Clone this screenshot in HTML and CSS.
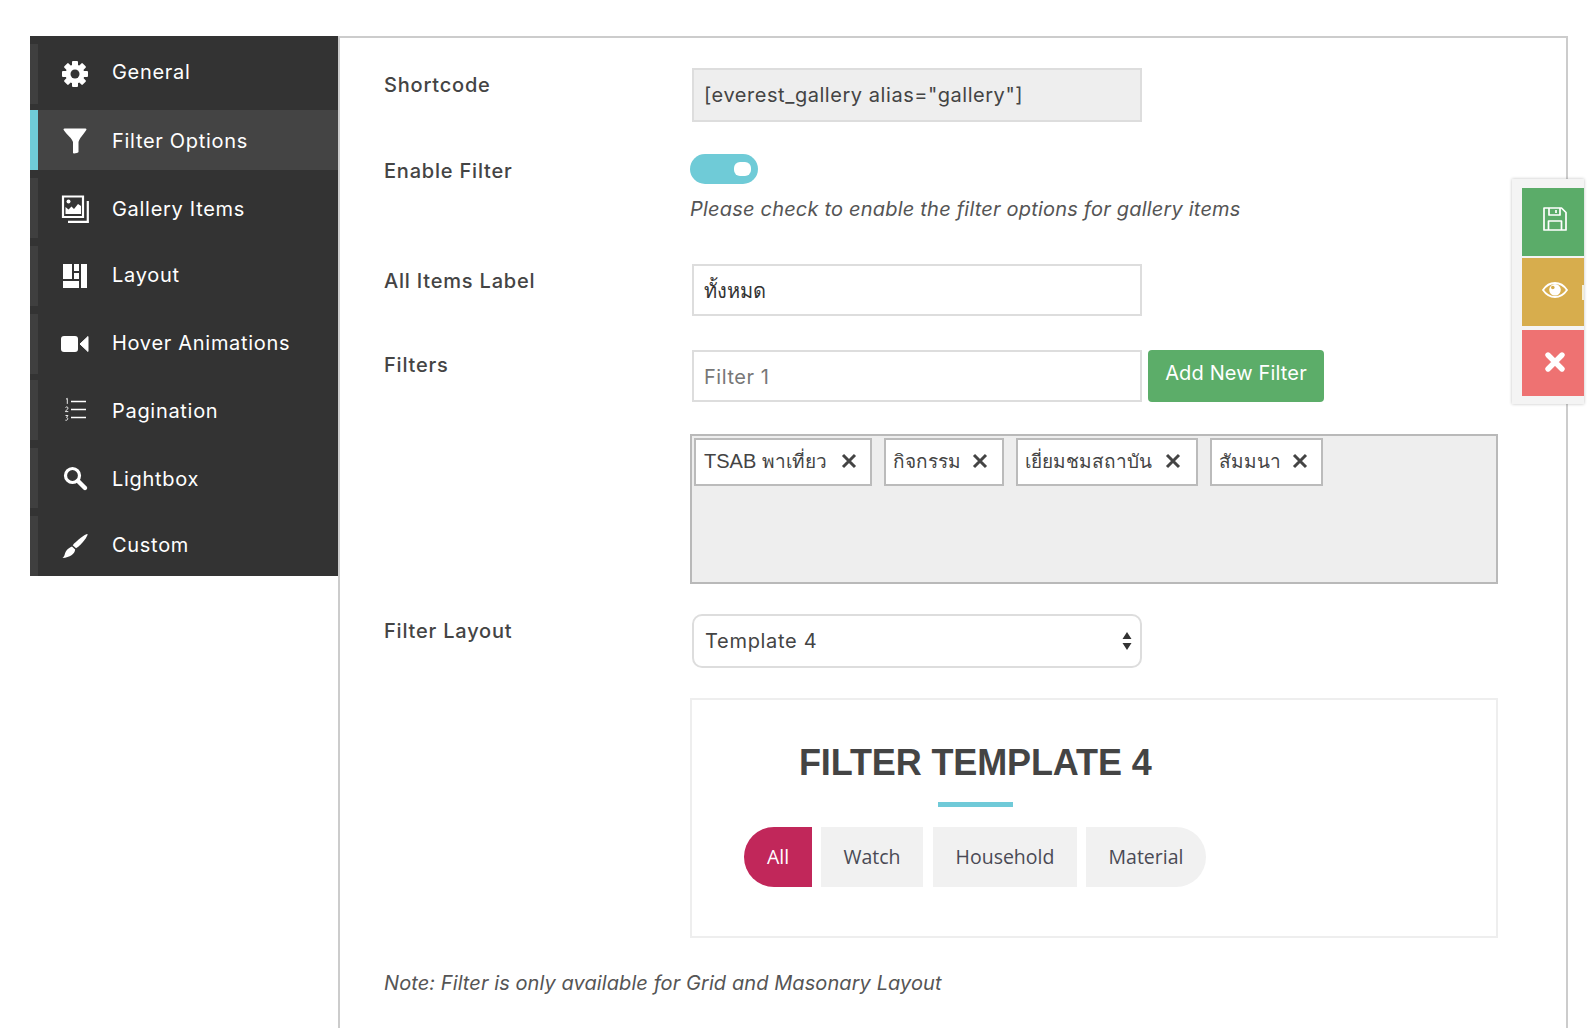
FILE: index.html
```html
<!DOCTYPE html>
<html lang="en">
<head>
<meta charset="utf-8">
<title>Filter Options</title>
<link rel="stylesheet" href="styles.css">
</head>
<body>
<div class="page">
  <nav class="sidebar">
    <a class="nav-item">
      <svg class="nav-icon" viewBox="0 0 30 30"><g fill="#fff"><rect x="12" y="2" width="6" height="26" rx="1"/><rect x="12" y="2" width="6" height="26" rx="1" transform="rotate(45 15 15)"/><rect x="12" y="2" width="6" height="26" rx="1" transform="rotate(90 15 15)"/><rect x="12" y="2" width="6" height="26" rx="1" transform="rotate(135 15 15)"/></g><circle cx="15" cy="15" r="9.500" fill="#fff"/><circle cx="15" cy="15" r="4.500" fill="#333"/></svg>
      <span class="text-up-2">General</span>
    </a>
    <a class="nav-item tight active">
      <svg class="nav-icon" viewBox="0 0 30 30"><path d="M4.500 3.500H25.500c.9 0 1.200.8.8 1.400C23 10 19.500 13 18.500 17v10c0 .9-5.500 2-5.500 1V17C12 13 7 10 3.700 4.900c-.4-.6-.1-1.400.8-1.400z" fill="#fff"/></svg>
      <span class="text-down">Filter Options</span>
    </a>
    <a class="nav-item">
      <svg class="nav-icon" viewBox="0 0 30 30"><path d="M3 3.500h20v20.500H3z" fill="none" stroke="#fff" stroke-width="2.200"/><path d="M27.800 8v20.800H8" fill="none" stroke="#fff" stroke-width="2.200"/><path d="M5.500 21v-7l3 2.500 3-3 2.500 2.500 4-5 3 2v8z" fill="#fff"/><circle cx="8.500" cy="8.500" r="2" fill="#fff"/></svg>
      <span class="text-down">Gallery Items</span>
    </a>
    <a class="nav-item">
      <svg class="nav-icon" viewBox="0 0 30 30"><path d="M3 3h9v15H3zM14 3h5v7h-5zM21 3h6v24h-6zM14 12h5v6h-5zM3 20h16v7H3z" fill="#fff"/></svg>
      <span class="text-up">Layout</span>
    </a>
    <a class="nav-item">
      <svg class="nav-icon" viewBox="0 0 30 30"><rect x="1" y="7" width="17" height="16" rx="3" fill="#fff"/><path d="M20 15l8-7.500v15z" fill="#fff" stroke="#fff" stroke-width="1" stroke-linejoin="round"/></svg>
      <span class="text-up">Hover Animations</span>
    </a>
    <a class="nav-item tight">
      <svg class="nav-icon" viewBox="0 0 30 30"><path d="M11 6.500h15M11 14.500h15M11 22.500h15" stroke="#fff" stroke-width="1.300"/><path d="M6 4.200l1.300-.8v5.500M5.500 12.500c.8-1 2.600-.6 2.500.6 0 1-2.300 2.500-2.600 3.500h2.900M5.500 20.500h2.400l-1.300 1.900c1.500 0 1.800 3.400-1.200 2.800" fill="none" stroke="#fff" stroke-width=".9"/></svg>
      <span class="text-down">Pagination</span>
    </a>
    <a class="nav-item">
      <svg class="nav-icon" viewBox="0 0 30 30"><circle cx="12.500" cy="12.500" r="7" fill="none" stroke="#fff" stroke-width="3.200"/><path d="M18 18l7 7" stroke="#fff" stroke-width="4.400" stroke-linecap="round"/></svg>
      <span class="text-down">Lightbox</span>
    </a>
    <a class="nav-item">
      <svg class="nav-icon" viewBox="0 0 30 30"><path d="M27.500 3c.8 1.500-5.500 10.500-11.500 14.300l-3.300-3C17 9 26 2.500 27.500 3z" fill="#fff"/><path d="M12 15.500l3.200 2.900c-.6 4.600-5.100 7.800-12.700 8.600 2.400-1.500 2-5 4-7.500 1.300-1.700 3.300-3 5.500-4z" fill="#fff"/></svg>
      <span class="text-up">Custom</span>
    </a>
  </nav>

  <main class="panel">
    <div class="row row-shortcode">
      <label class="label">Shortcode</label>
      <div class="field"><div class="input input-readonly">[everest_gallery alias="gallery"]</div></div>
    </div>
    <div class="row row-enable">
      <label class="label">Enable Filter</label>
      <div class="field">
        <div class="toggle"><span class="knob"></span></div>
        <p class="help">Please check to enable the filter options for gallery items</p>
      </div>
    </div>
    <div class="row row-all">
      <label class="label">All Items Label</label>
      <div class="field"><div class="input input-thai">ทั้งหมด</div></div>
    </div>
    <div class="row row-filters">
      <label class="label">Filters</label>
      <div class="field">
        <div class="add-line">
          <div class="input input-placeholder">Filter 1</div>
          <button class="add-btn">Add New Filter</button>
        </div>
        <div class="tag-box">
          <span class="tag tag-1"><span>TSAB <span class="thai">พาเที่ยว</span></span><svg class="tag-x" viewBox="0 0 16 16"><path d="M2 2l12 12M14 2L2 14"/></svg></span>
          <span class="tag tag-2"><span class="thai">กิจกรรม</span><svg class="tag-x" viewBox="0 0 16 16"><path d="M2 2l12 12M14 2L2 14"/></svg></span>
          <span class="tag tag-3"><span class="thai">เยี่ยมชมสถาบัน</span><svg class="tag-x" viewBox="0 0 16 16"><path d="M2 2l12 12M14 2L2 14"/></svg></span>
          <span class="tag tag-4"><span class="thai">สัมมนา</span><svg class="tag-x" viewBox="0 0 16 16"><path d="M2 2l12 12M14 2L2 14"/></svg></span>
        </div>
      </div>
    </div>
    <div class="row row-layout">
      <label class="label">Filter Layout</label>
      <div class="field">
        <div class="select">Template 4
          <svg class="select-arrows" viewBox="0 0 10 20"><path d="M5 1l4.500 7h-9zM5 19l4.500-7h-9z"/></svg>
        </div>
        <div class="preview">
          <h2 class="preview-title">FILTER TEMPLATE 4</h2>
          <div class="preview-bar"></div>
          <div class="pills">
            <span class="pill pill-all">All</span>
            <span class="pill pill-watch">Watch</span>
            <span class="pill pill-household">Household</span>
            <span class="pill pill-material">Material</span>
          </div>
        </div>
      </div>
    </div>
    <p class="note">Note: Filter is only available for Grid and Masonary Layout</p>
  </main>
</div>

<aside class="actions">
  <button class="action action-save"><svg class="action-icon" viewBox="0 0 26 26"><path d="M2 2h17.500L24 6.500V24H2z M7 2v7h11V2 M6.500 24v-9h13v9 M14 4v3" fill="none" stroke="#fff" stroke-width="1.700" stroke-linejoin="round"/></svg></button>
  <button class="action action-view"><svg class="action-icon" viewBox="0 0 26 26"><path d="M1 13c3-4.500 7-7 12-7s9 2.500 12 7c-3 4.500-7 7-12 7s-9-2.500-12-7z" fill="none" stroke="#fff" stroke-width="1.800"/><circle cx="13" cy="12.800" r="5.800" fill="#fff"/><circle cx="10.800" cy="10.500" r="1.800" fill="#d7ad4d"/></svg><span class="action-tick"></span></button>
  <button class="action action-close"><svg class="action-icon" viewBox="0 0 26 26"><path d="M6 6l14 14M20 6L6 20" stroke="#fff" stroke-width="5.400" stroke-linecap="round"/></svg></button>
</aside>
</body>
</html>
```

FILE: styles.css
```css
* { box-sizing: border-box; }

html, body {
  margin: 0;
  height: 100%;
  overflow: hidden;
  background: #fff;
}

body {
  font-family: Inter, "Noto Sans", "Liberation Sans", sans-serif;
  color: #444;
}

.page {
  display: flex;
  align-items: flex-start;
  height: 1028px;
  padding: 36px 20px 0 30px;
}

.sidebar {
  flex: none;
  display: flex;
  flex-direction: column;
  gap: 8px;
  width: 308px;
  height: 540px;
  padding-top: 8px;
  background: #333;
}

.nav-item {
  display: flex;
  align-items: center;
  height: 60px;
  padding-left: 22px;
  border-left: 8px solid #3f3f3f;
  color: #fff;
  font-size: 20px;
  letter-spacing: 0.7px;
}

.nav-item.tight { margin-top: -2px; }

.nav-item.active {
  background: #444;
  border-left-color: #6fcbd7;
}

.nav-icon {
  flex: none;
  width: 30px;
  height: 30px;
  margin-right: 22px;
}

.text-up { padding-bottom: 2px; }
.text-up-2 { padding-bottom: 4px; }
.text-down { padding-top: 2px; }

.panel {
  flex: 1;
  height: 992px;
  padding: 30px 0 0 44px;
  border: 2px solid #ccc;
  border-bottom: 0;
}

.row {
  display: flex;
}

.row-shortcode { margin-bottom: 32px; }
.row-enable { margin-bottom: 43px; }
.row-all { margin-bottom: 34px; }
.row-filters { margin-bottom: 30px; }

.label {
  flex: none;
  width: 306px;
  font-size: 20px;
  font-weight: 500;
  line-height: 24px;
  letter-spacing: 0.8px;
  color: #444;
}

.row-shortcode .label { padding-top: 5px; }
.row-enable .label { padding-top: 5px; }
.row-all .label { padding-top: 5px; }
.row-filters .label { padding-top: 3px; }
.row-layout .label { padding-top: 5px; }

.field {
  flex: 1;
  width: 808px;
  max-width: 808px;
}

.input {
  width: 450px;
  height: 52px;
  margin-left: 2px;
  padding: 0 10px;
  border: 2px solid #ddd;
  font-size: 20px;
  line-height: 50px;
  letter-spacing: 0.55px;
  color: #444;
  background: #fff;
}

.input-readonly {
  height: 54px;
  line-height: 50px;
  background: #eee;
}

.input-thai {
  color: #333;
  font-weight: 500;
  letter-spacing: 0;
}

.input-placeholder { color: #777; }

.toggle {
  position: relative;
  width: 68px;
  height: 30px;
  border-radius: 15px;
  background: #6fcbd7;
}

.knob {
  position: absolute;
  top: 8px;
  left: 44px;
  width: 17px;
  height: 14px;
  border-radius: 6px;
  background: #fff;
}

.help {
  margin: 13px 0 0;
  font-size: 20px;
  font-style: italic;
  line-height: 24px;
  letter-spacing: 0.2px;
  color: #555;
}

.add-line {
  display: flex;
  gap: 6px;
  margin-bottom: 32px;
}

.add-btn {
  flex: none;
  width: 176px;
  height: 52px;
  padding: 0 0 6px;
  border: 0;
  border-radius: 4px;
  background: #5cad69;
  color: #fff;
  font-family: inherit;
  font-size: 20px;
  letter-spacing: 0.15px;
}

.tag-box {
  display: flex;
  align-items: flex-start;
  height: 150px;
  padding: 2px;
  border: 2px solid #b9b9b9;
  background: #eee;
  font-family: "Liberation Sans", "Noto Sans", sans-serif;
}

.tag {
  display: flex;
  align-items: center;
  justify-content: space-between;
  height: 48px;
  padding: 0 13px 2px 7px;
  border: 2px solid #bbb;
  background: #fff;
  font-size: 20px;
  color: #444;
}

.thai { font-size: 19px; }

.tag-1 { width: 178px; padding-left: 8px; }
.tag-2 { width: 120px; margin-left: 12px; padding-right: 14px; }
.tag-3 { width: 182px; margin-left: 12px; padding-right: 15px; }
.tag-4 { width: 113px; margin-left: 12px; }

.tag-x {
  flex: none;
  width: 16px;
  height: 16px;
  fill: none;
  stroke: #444;
  stroke-width: 3;
}

.select {
  position: relative;
  width: 450px;
  height: 54px;
  margin-left: 2px;
  padding: 0 11px;
  border: 2px solid #ddd;
  border-radius: 10px;
  font-size: 20px;
  line-height: 50px;
  letter-spacing: 0.7px;
  color: #444;
  background: #fff;
}

.select-arrows {
  position: absolute;
  top: 15px;
  right: 8px;
  width: 10px;
  height: 20px;
  fill: #333;
}

.preview {
  height: 240px;
  margin-top: 30px;
  padding: 43px 0 0 52px;
  border: 2px solid #eee;
}

.preview-title {
  margin: 0;
  padding-left: 55px;
  font-family: "Liberation Sans", sans-serif;
  font-size: 36px;
  font-weight: 700;
  line-height: 40px;
  letter-spacing: -0.12px;
  color: #444;
}

.preview-bar {
  width: 75px;
  height: 5px;
  margin: 19px 0 20px 194px;
  background: #70cad8;
}

.pills {
  display: flex;
  font-family: "Open Sans", sans-serif;
  font-size: 19.500px;
}

.pill {
  display: flex;
  align-items: center;
  justify-content: center;
  height: 60px;
  padding-bottom: 2px;
  background: #f1f1f1;
  color: #4a4a55;
}

.pill-all {
  width: 68px;
  border-radius: 30px 0 0 30px;
  background: #c1275a;
  color: #fff;
}

.pill-watch { width: 102px; margin-left: 9px; }
.pill-household { width: 144px; margin-left: 10px; }

.pill-material {
  width: 120px;
  margin-left: 9px;
  border-radius: 0 30px 30px 0;
}

.note {
  margin: 33px 0 0;
  font-size: 20px;
  font-style: italic;
  line-height: 24px;
  letter-spacing: 0.08px;
  color: #555;
}

.actions {
  position: absolute;
  top: 179px;
  left: 1512px;
  display: flex;
  flex-direction: column;
  width: 72px;
  height: 225px;
  padding: 9px 0 8px 10px;
  background: #f4f4f4;
  box-shadow: 0 0 3px rgba(0, 0, 0, 0.25);
}

.action {
  position: relative;
  flex: none;
  display: flex;
  align-items: center;
  justify-content: center;
  width: 62px;
  padding: 0 0 0 4px;
  border: 0;
}

.action-save { height: 68px; padding-bottom: 6px; background: #5bac69; }
.action-view { height: 68px; margin-top: 2px; padding-bottom: 4px; background: #d7ad4d; }
.action-close { height: 66px; margin-top: 4px; padding-bottom: 2px; background: #ee7272; }

.action-icon {
  width: 26px;
  height: 26px;
}

.action-tick {
  position: absolute;
  top: 27px;
  right: 0;
  width: 2px;
  height: 15px;
  background: #f5efd8;
}
```
